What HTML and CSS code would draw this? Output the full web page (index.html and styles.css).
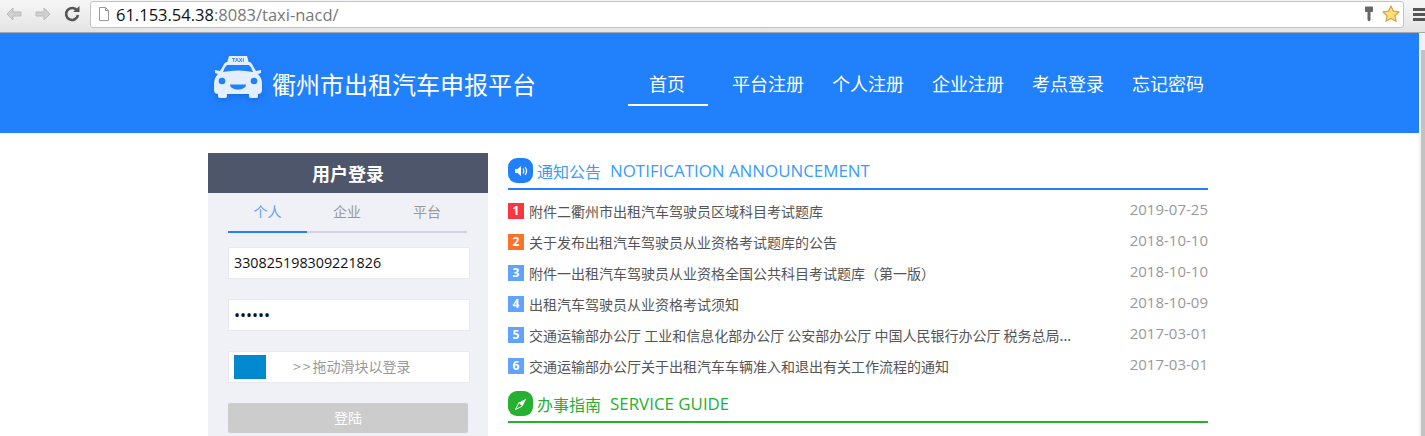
FILE: index.html
```html
<!DOCTYPE html>
<html>
<head>
    <meta charset="utf-8">
    <link rel="stylesheet" href="styles.css">
    <title>衢州市出租汽车申报平台</title>
</head>
<body>
    <!-- Browser toolbar -->
    <div class="toolbar">
        <svg class="nav-icon" width="20" height="20" viewBox="0 0 20 20"><path d="M3 10l6-6v4h8v4H9v4z" fill="#d0d0d0" stroke="#bbb"/></svg>
        <svg class="nav-icon" width="20" height="20" viewBox="0 0 20 20"><path d="M17 10l-6-6v4H3v4h8v4z" fill="#d0d0d0" stroke="#bbb"/></svg>
        <svg class="nav-icon" width="20" height="20" viewBox="0 0 20 20"><path d="M15 6.500A6 6 0 1 0 16 11" fill="none" stroke="#555" stroke-width="2.600"/><path d="M11 8h6.500V2z" fill="#555"/></svg>
        <div class="address-bar">
            <svg width="14" height="16" viewBox="0 0 14 16"><path d="M2.500 1.500h6l3 3v10h-9z" fill="#fff" stroke="#999"/><path d="M8.500 1.500v3h3" fill="none" stroke="#999"/></svg>
            <span class="url"><b>61.153.54.38</b>:8083/taxi-nacd/</span>
            <div class="address-icons">
                <svg width="10" height="16" viewBox="0 0 10 16"><path d="M1 1.500C1 1 1.500 .5 2 .5h6c.5 0 1 .5 1 1V5c0 .5-.5 1-1 1H6.500v8l-1.500 1.500L3.500 14V6H2c-.5 0-1-.5-1-1z" fill="#666"/></svg>
                <svg width="18" height="18" viewBox="0 0 18 18"><path d="M9 1l2.400 5.200 5.600.7-4.100 3.800 1.100 5.600L9 13.500l-5 2.800 1.100-5.600L1 6.900l5.600-.7z" fill="#fde07a" stroke="#d9a441" stroke-width="1.300" stroke-linejoin="round"/></svg>
            </div>
        </div>
        <div class="menu-icon"><span></span><span></span><span></span></div>
    </div>

    <div class="window">
        <div class="page">
            <!-- Header -->
            <div class="header">
                <div class="container header-inner">
                    <div class="logo">
                        <svg class="taxi" width="50" height="43" viewBox="0 0 50 43">
                            <path d="M16 0h18l2 7H14z" fill="#e3eeff"/>
                            <text class="taxi-sign" x="25" y="5.500" text-anchor="middle">TAXI</text>
                            <path d="M14 6H36C38 6 39 8 40 10L43 15L48 14V17L45 18C48 21 49 24 49 28V34C49 37 47 38 45 38V40C45 42 44 42 42 42H38C36 42 36 41 36 38H14C14 41 14 42 12 42H7C5 42 5 41 5 38C3 38 1 37 1 34V28C1 24 2 21 5 18L2 17V14L7 15L10 10C11 8 12 6 14 6z" fill="#e3eeff"/>
                            <path d="M15 9H35C37 9 38 11 40 16C30 14 20 14 10 16C12 11 13 9 15 9z" fill="#2180fc"/>
                            <circle cx="9" cy="25" r="3.300" fill="#2180fc"/>
                            <circle cx="41" cy="25" r="3.300" fill="#2180fc"/>
                            <path d="M17 28.500H33C33 32 29 33.500 25 33.500S17 32 17 28.500z" fill="#2180fc"/>
                        </svg>
                        <span class="logo-text">衢州市出租汽车申报平台</span>
                    </div>
                    <div class="nav">
                        <a class="nav-item active">首页</a>
                        <a class="nav-item">平台注册</a>
                        <a class="nav-item">个人注册</a>
                        <a class="nav-item">企业注册</a>
                        <a class="nav-item">考点登录</a>
                        <a class="nav-item">忘记密码</a>
                    </div>
                </div>
            </div>

            <div class="container main">
                <!-- Login box -->
                <div class="login">
                    <div class="login-title">用户登录</div>
                    <div class="login-body">
                        <div class="tabs">
                            <div class="tab active">个人</div>
                            <div class="tab">企业</div>
                            <div class="tab">平台</div>
                        </div>
                        <div class="field">330825198309221826</div>
                        <div class="field dots">••••••</div>
                        <div class="field slider">
                            <span class="slider-handle"></span>
                            <span class="slider-text"><span class="arrows">&gt;&gt;</span>拖动滑块以登录</span>
                        </div>
                        <div class="login-button">登陆</div>
                    </div>
                </div>

                <!-- Right column -->
                <div class="news">
                    <div class="section-title blue">
                        <span class="section-icon">
                            <svg width="14" height="14" viewBox="0 0 14 14"><path d="M1 5h2.500L7 2v10L3.500 9H1z" fill="#fff"/><path d="M9 4.500c1 1.500 1 3.500 0 5M11 3c2 2.500 2 5.500 0 8" fill="none" stroke="#fff" stroke-width="1.200"/></svg>
                        </span>
                        <span class="section-text">通知公告</span>
                        <span class="section-en">NOTIFICATION ANNOUNCEMENT</span>
                    </div>
                    <div class="news-list">
                        <div class="news-row">
                            <span class="num red">1</span>
                            <span class="news-title">附件二衢州市出租汽车驾驶员区域科目考试题库</span>
                            <span class="news-date">2019-07-25</span>
                        </div>
                        <div class="news-row">
                            <span class="num orange">2</span>
                            <span class="news-title">关于发布出租汽车驾驶员从业资格考试题库的公告</span>
                            <span class="news-date">2018-10-10</span>
                        </div>
                        <div class="news-row">
                            <span class="num">3</span>
                            <span class="news-title">附件一出租汽车驾驶员从业资格全国公共科目考试题库（第一版）</span>
                            <span class="news-date">2018-10-10</span>
                        </div>
                        <div class="news-row">
                            <span class="num">4</span>
                            <span class="news-title">出租汽车驾驶员从业资格考试须知</span>
                            <span class="news-date">2018-10-09</span>
                        </div>
                        <div class="news-row">
                            <span class="num">5</span>
                            <span class="news-title">交通运输部办公厅 工业和信息化部办公厅 公安部办公厅 中国人民银行办公厅 税务总局...</span>
                            <span class="news-date">2017-03-01</span>
                        </div>
                        <div class="news-row">
                            <span class="num">6</span>
                            <span class="news-title">交通运输部办公厅关于出租汽车车辆准入和退出有关工作流程的通知</span>
                            <span class="news-date">2017-03-01</span>
                        </div>
                    </div>
                    <div class="section-title green">
                        <span class="section-icon">
                            <svg width="14" height="14" viewBox="0 0 14 14"><path d="M12.500 1.500L8.500 9 5 5.500z" fill="#fff"/><path d="M1.500 12.500L5 5.500 8.500 9z" fill="none" stroke="#fff"/></svg>
                        </span>
                        <span class="section-text">办事指南</span>
                        <span class="section-en">SERVICE GUIDE</span>
                    </div>
                </div>
            </div>
        </div>
        <div class="scrollbar"><div class="thumb"></div></div>
    </div>
</body>
</html>
```

FILE: styles.css
```css
html, body {
    margin: 0;
    padding: 0;
    height: 436px;
    overflow: hidden;
}

body {
    background-color: #ffffff;
    font-family: "Noto Sans CJK SC", "Open Sans", sans-serif;
    display: flex;
    flex-direction: column;
}

/* Browser toolbar */
.toolbar {
    height: 28px;
    padding: 0 0 4px 4px;
    background: linear-gradient(#f6f6f6, #e4e4e4);
    border-bottom: 1px solid #a8a8a8;
    display: flex;
    align-items: center;
    gap: 9px;
    flex-shrink: 0;
}

.address-bar {
    flex: 1;
    height: 25px;
    margin-left: -1px;
    background-color: #ffffff;
    border: 1px solid #c4c4c4;
    border-radius: 3px;
    display: flex;
    align-items: center;
    padding-left: 6px;
    gap: 5px;
}

.url {
    font-family: "Open Sans", sans-serif;
    font-size: 16.500px;
    color: #777;
}

.url b {
    font-weight: normal;
    color: #111;
}

.address-icons {
    margin-left: auto;
    margin-right: 3px;
    display: flex;
    align-items: center;
    gap: 8px;
}

.menu-icon {
    width: 16px;
    margin-right: -4px;
    display: flex;
    flex-direction: column;
    gap: 2px;
}

.menu-icon span {
    height: 3px;
    background-color: #555;
}

/* Page area */
.window {
    flex: 1;
    display: flex;
    min-height: 0;
}

.page {
    flex: 1;
    min-width: 0;
}

.scrollbar {
    width: 4px;
    padding-left: 2px;
    padding-top: 17px;
    background-color: #f1f1f1;
}

.thumb {
    height: 100%;
    background-color: #c2c2c2;
}

.container {
    width: 1000px;
    margin-left: 208px;
}

/* Header */
.header {
    background-color: #2180fc;
    height: 100px;
}

.header-inner {
    display: flex;
    height: 100%;
}

.logo {
    display: flex;
    align-items: center;
    color: #ffffff;
    padding-left: 5px;
    gap: 9px;
}

.taxi {
    margin-bottom: 12px;
    filter: drop-shadow(0 3px 3px rgba(0, 60, 160, 0.25));
}

.taxi-sign {
    font-family: "Liberation Sans", sans-serif;
    font-size: 5.500px;
    font-weight: bold;
    fill: #2180fc;
}

.logo-text {
    font-size: 24px;
    white-space: nowrap;
}

.nav {
    display: flex;
    gap: 28px;
    margin-left: auto;
    margin-right: 4px;
}

.nav-item {
    width: 72px;
    height: 73px;
    line-height: 100px;
    padding-right: 2px;
    box-sizing: border-box;
    text-align: center;
    white-space: nowrap;
    color: #ffffff;
    font-size: 18px;
}

.nav-item.active {
    width: 80px;
    margin-right: -4px;
    border-bottom: 2px solid #ffffff;
}

/* Login box */
.main {
    display: flex;
    gap: 20px;
    padding-top: 20px;
}

.login {
    width: 280px;
    flex-shrink: 0;
}

.login-title {
    height: 40px;
    line-height: 40px;
    background-color: #4e566b;
    color: #ffffff;
    text-align: center;
    font-size: 18px;
    font-weight: bold;
}

.login-body {
    background-color: #f0f1f6;
    padding: 0 18px 0 20px;
    height: 260px;
}

.tabs {
    display: flex;
    width: 239px;
    height: 38px;
    border-bottom: 2px solid #d2d2e4;
}

.tab {
    flex: 1;
    line-height: 36px;
    text-align: center;
    font-size: 14px;
    color: #999999;
    height: 40px;
    box-sizing: border-box;
}

.tab.active {
    flex: 0 0 79px;
    color: #5f9bfd;
    border-bottom: 2px solid #2180fc;
}

.field {
    height: 32px;
    width: 242px;
    box-sizing: border-box;
    margin-top: 14px;
    margin-bottom: 20px;
    background-color: #ffffff;
    border: 1px solid #e8e8ee;
    padding-left: 5px;
    line-height: 30px;
    font-family: "Open Sans", sans-serif;
    font-size: 14.300px;
    color: #111;
}

.field + .field {
    margin-top: 0;
}

.dots {
    font-size: 16px;
}

.slider {
    display: flex;
    align-items: center;
}

.slider-handle {
    width: 32px;
    height: 24px;
    background-color: #0089cf;
}

.slider-text {
    margin-left: 27px;
    padding-bottom: 2px;
    font-family: "Noto Sans CJK SC", sans-serif;
    font-size: 14px;
    color: #999999;
}

.arrows {
    letter-spacing: 2px;
}

.login-button {
    width: 240px;
    height: 30px;
    line-height: 28px;
    background-color: #cccccc;
    border-radius: 2px;
    color: #ffffff;
    text-align: center;
    font-size: 14px;
}

/* News column */
.news {
    flex: 1;
    min-width: 0;
}

.section-title {
    height: 35px;
    display: flex;
    align-items: center;
    border-bottom: 2px solid;
    font-size: 16px;
}

.section-icon {
    width: 25px;
    height: 25px;
    border-radius: 9px;
    margin-right: 4px;
    display: flex;
    align-items: center;
    justify-content: center;
}

.section-en {
    font-family: "Open Sans", sans-serif;
    font-size: 16.900px;
    margin-left: 9px;
}

.blue {
    color: #3a9bfc;
    border-bottom-color: #2180fc;
}

.blue .section-icon {
    background-color: #2180fc;
}

.green {
    color: #25b02f;
    border-bottom-color: #25b02f;
}

.green .section-icon {
    background-color: #25b02f;
}

.news-list {
    padding: 5px 0;
}

.news-row {
    display: flex;
    align-items: center;
    height: 31px;
}

.num {
    width: 16px;
    height: 16px;
    line-height: 16px;
    margin-right: 5px;
    background-color: #5fa3fb;
    color: #ffffff;
    font-family: "Open Sans", sans-serif;
    font-size: 12px;
    font-weight: bold;
    text-align: center;
}

.red {
    background-color: #fb3640;
}

.orange {
    background-color: #fb7229;
}

.news-title {
    font-size: 14px;
    color: #555555;
}

.news-date {
    margin-left: auto;
    padding-bottom: 4px;
    font-family: "Open Sans", sans-serif;
    font-size: 15px;
    color: #999999;
}
```
